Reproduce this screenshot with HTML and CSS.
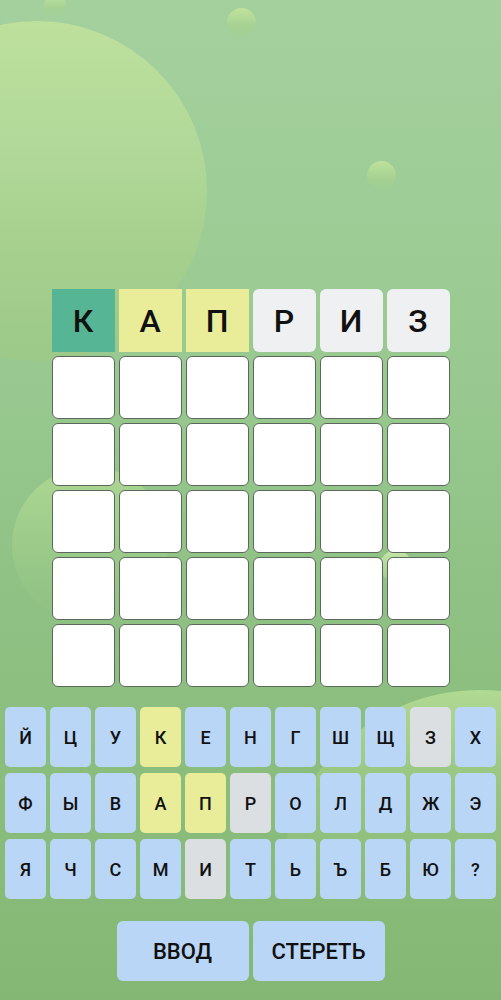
FILE: index.html
```html
<!DOCTYPE html>
<html lang="ru">
<head>
<meta charset="utf-8">
<title>Вордли</title>
<link rel="stylesheet" href="styles.css">
</head>
<body>
<div class="app">
  <div class="bg">
    <span class="bubble b-big"></span>
    <span class="bubble b-s1"></span>
    <span class="bubble b-s2"></span>
    <span class="bubble b-s3"></span>
    <span class="bubble b-left"></span>
    <span class="bubble b-mid"></span>
    <span class="bubble b-br"></span>
  </div>

  <main class="content">
    <section class="board">
      <div class="tile correct">К</div>
      <div class="tile present">А</div>
      <div class="tile present">П</div>
      <div class="tile absent">Р</div>
      <div class="tile absent">И</div>
      <div class="tile absent">З</div>

      <div class="tile empty"></div><div class="tile empty"></div><div class="tile empty"></div><div class="tile empty"></div><div class="tile empty"></div><div class="tile empty"></div>
      <div class="tile empty"></div><div class="tile empty"></div><div class="tile empty"></div><div class="tile empty"></div><div class="tile empty"></div><div class="tile empty"></div>
      <div class="tile empty"></div><div class="tile empty"></div><div class="tile empty"></div><div class="tile empty"></div><div class="tile empty"></div><div class="tile empty"></div>
      <div class="tile empty"></div><div class="tile empty"></div><div class="tile empty"></div><div class="tile empty"></div><div class="tile empty"></div><div class="tile empty"></div>
      <div class="tile empty"></div><div class="tile empty"></div><div class="tile empty"></div><div class="tile empty"></div><div class="tile empty"></div><div class="tile empty"></div>
    </section>

    <section class="keyboard">
      <div class="krow">
        <button class="key">Й</button>
        <button class="key">Ц</button>
        <button class="key">У</button>
        <button class="key k-present">К</button>
        <button class="key">Е</button>
        <button class="key">Н</button>
        <button class="key">Г</button>
        <button class="key">Ш</button>
        <button class="key">Щ</button>
        <button class="key k-absent">З</button>
        <button class="key">Х</button>
      </div>
      <div class="krow">
        <button class="key">Ф</button>
        <button class="key">Ы</button>
        <button class="key">В</button>
        <button class="key k-present">А</button>
        <button class="key k-present">П</button>
        <button class="key k-absent">Р</button>
        <button class="key">О</button>
        <button class="key">Л</button>
        <button class="key">Д</button>
        <button class="key">Ж</button>
        <button class="key">Э</button>
      </div>
      <div class="krow">
        <button class="key">Я</button>
        <button class="key">Ч</button>
        <button class="key">С</button>
        <button class="key">М</button>
        <button class="key k-absent">И</button>
        <button class="key">Т</button>
        <button class="key">Ь</button>
        <button class="key">Ъ</button>
        <button class="key">Б</button>
        <button class="key">Ю</button>
        <button class="key">?</button>
      </div>
    </section>

    <section class="actions">
      <button class="action">ВВОД</button>
      <button class="action">СТЕРЕТЬ</button>
    </section>
  </main>
</div>
</body>
</html>
```

FILE: styles.css
```css
* { box-sizing: border-box; }

html, body {
  margin: 0;
  padding: 0;
}

body {
  font-family: Roboto, "Noto Sans", "Liberation Sans", sans-serif;
  color: #111;
}

.app {
  position: relative;
  width: 501px;
  height: 1000px;
  overflow: hidden;
  background: linear-gradient(180deg, #a4d09d 0%, #9bcb93 30%, #8fc184 60%, #85b774 100%);
}

/* decorative background bubbles */
.bg {
  position: absolute;
  inset: 0;
  pointer-events: none;
}

.bubble {
  position: absolute;
  border-radius: 50%;
  background: linear-gradient(180deg, rgba(196, 230, 156, 0.85) 0%, rgba(170, 212, 140, 0.55) 60%, rgba(160, 205, 135, 0.15) 100%);
}

.b-big { left: -133px; top: 21px; width: 340px; height: 340px;
  background: linear-gradient(180deg, #bde09c 0%, #b2d999 35%, #a5cf8d 70%, #9cc988 100%); }
.b-s1 { left: 44px; top: -6px; width: 22px; height: 22px; }
.b-s2 { left: 227px; top: 8px; width: 29px; height: 29px; }
.b-s3 { left: 367px; top: 161px; width: 29px; height: 29px; }
.b-left { left: 12px; top: 467px; width: 156px; height: 156px;
  background: linear-gradient(180deg, #acd792 0%, rgba(160, 206, 138, 0.6) 55%, rgba(145, 195, 130, 0) 100%); }
.b-mid { left: 380px; top: 550px; width: 32px; height: 32px;
  background: linear-gradient(180deg, #c6e6a6 0%, rgba(180, 220, 150, 0.3) 100%); }
.b-br { left: 280px; top: 690px; width: 400px; height: 400px;
  background: linear-gradient(180deg, #b0d992 0%, rgba(160, 205, 130, 0.5) 25%, rgba(140, 190, 120, 0) 55%); }

.content {
  position: relative;
  display: flex;
  flex-direction: column;
  align-items: center;
  padding-top: 289px;
}

/* board */
.board {
  display: grid;
  grid-template-columns: repeat(6, 63px);
  grid-auto-rows: 63px;
  gap: 4px;
}

.tile {
  display: flex;
  align-items: center;
  justify-content: center;
  font-size: 32px;
  font-weight: 500;
  color: #111;
}

.tile.correct { background: #56b594; }
.tile.present { background: #e9ec99; }
.tile.absent { background: #eef0f2; border-radius: 6px; }
.tile.empty {
  background: #fff;
  border: 1.5px solid #5d685c;
  border-radius: 6px;
}

/* keyboard */
.keyboard {
  margin-top: 20px;
  width: 501px;
  padding: 0 5px;
  display: flex;
  flex-direction: column;
  gap: 6px;
}

.krow {
  display: flex;
  gap: 4px;
}

.key {
  flex: 0 0 41px;
  height: 60px;
  border: none;
  border-radius: 5px;
  padding: 0;
  background: #bad6f6;
  font-family: Roboto, "Noto Sans", "Liberation Sans", sans-serif;
  font-size: 18px;
  font-weight: 500;
  color: #111;
}

.key.k-present { background: #e9ec99; }
.key.k-absent { background: #dcdfe1; }

/* actions */
.actions {
  margin-top: 22px;
  display: flex;
  gap: 4px;
}

.action {
  width: 132px;
  height: 60px;
  border: none;
  border-radius: 6px;
  background: #bad6f6;
  font-family: Roboto, "Noto Sans", "Liberation Sans", sans-serif;
  font-size: 22px;
  font-weight: 500;
  color: #111;
  padding: 0;
}
```
